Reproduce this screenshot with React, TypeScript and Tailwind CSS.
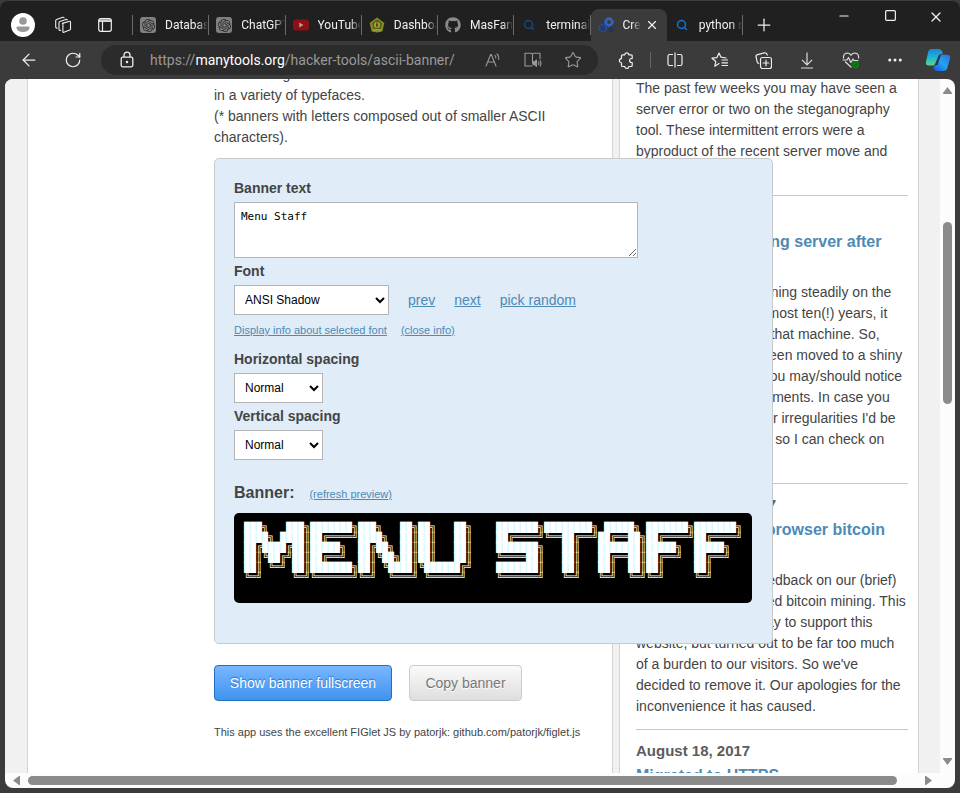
import React from "react";
import { ArrowLeft, Minus, MoreHorizontal, Plus, RotateCw, Search, Square, Star, X } from "lucide-react";
import { FaGithub } from "react-icons/fa";
import { SiOpenai } from "react-icons/si";

const BANNER = [
  "███╗   ███╗███████╗███╗   ██╗██╗   ██╗    ███████╗████████╗ █████╗ ███████╗███████╗",
  "████╗ ████║██╔════╝████╗  ██║██║   ██║    ██╔════╝╚══██╔══╝██╔══██╗██╔════╝██╔════╝",
  "██╔████╔██║█████╗  ██╔██╗ ██║██║   ██║    ███████╗   ██║   ███████║█████╗  █████╗  ",
  "██║╚██╔╝██║██╔══╝  ██║╚██╗██║██║   ██║    ╚════██║   ██║   ██╔══██║██╔══╝  ██╔══╝  ",
  "██║ ╚═╝ ██║███████╗██║ ╚████║╚██████╔╝    ███████║   ██║   ██║  ██║██║     ██║     ",
  "╚═╝     ╚═╝╚══════╝╚═╝  ╚═══╝ ╚═════╝     ╚══════╝   ╚═╝   ╚═╝  ╚═╝╚═╝     ╚═╝     ",
].join("\n");

function OpenAiIcon() {
  return (
    <span className="flex size-4 shrink-0 items-center justify-center rounded-[3px] bg-[#808080] text-[#2b2b2b]">
      <SiOpenai size={13} />
    </span>
  );
}

function YouTubeIcon() {
  return (
    <svg width="16" height="16" viewBox="0 0 16 16" className="shrink-0">
      <rect x="0" y="2.5" width="16" height="11" rx="3" fill="#8c1114" />
      <path d="M6.3 5.6 10.4 8l-4.1 2.4z" fill="#b9a3a3" />
    </svg>
  );
}

function CrestIcon() {
  return (
    <svg width="16" height="16" viewBox="0 0 16 16" className="shrink-0">
      <path d="M8 .5 15.3 6l-2 8.5-5.3 1-5.3-1L.7 6z" fill="#8d8a1e" />
      <path d="M8 2.3 13 6.2l-1.4 6.3H4.4L3 6.2z" fill="#3e6b2a" />
      <circle cx="8" cy="8" r="3" fill="#b5a32a" />
      <path d="M8 4.8 9.3 8 8 11 6.7 8z" fill="#8f2a22" />
      <path d="M4 12h8v1.6H4z" fill="#a99c2c" />
    </svg>
  );
}

function GearsIcon() {
  return (
    <svg width="16" height="16" viewBox="0 0 16 16" fill="none" className="shrink-0">
      <circle cx="11" cy="5" r="3.2" stroke="#2f66c4" strokeWidth="2.4" />
      <circle cx="11" cy="5" r="4.4" stroke="#2f66c4" strokeDasharray="1.5 1.6" />
      <circle cx="4.8" cy="11" r="3.5" fill="#1d3a7c" stroke="#27509d" strokeDasharray="1.6 1.2" strokeWidth="2" />
      <circle cx="4.8" cy="11" r="1.2" fill="#3b3b3b" />
      <circle cx="13" cy="12.5" r="1.6" stroke="#1c3263" strokeWidth="1.4" />
    </svg>
  );
}

function BlueSearch({ dim }: { dim?: boolean }) {
  return (
    <span className={dim ? "flex size-4 shrink-0 items-center justify-center text-[#174a78]" : "flex size-4 shrink-0 items-center justify-center text-[#1676d2]"}>
      <Search size={12} strokeWidth={3} />
    </span>
  );
}

function WorkspacesIcon() {
  return (
    <svg width="18" height="18" viewBox="0 0 18 18" fill="none" stroke="#eee" strokeWidth="1.1" strokeLinejoin="round">
      <path d="m8.4 7.4 7.200-2.100q.9-.2.9.7v7q0 .8-.8 1.100l-5.800 2.200q-1 .3-1-.7V8.500q0-.8.5-1.100Z" />
      <path d="M7 14.200q-2 .6-2-.8V6.600q0-.9.900-1.200L12 3.400q1.200-.3 1.300.9" />
      <path d="M3.600 12q-1.900.4-1.900-.9V4.600q0-.9.900-1.200L8.800 1.300q1.200-.3 1.300.9" />
    </svg>
  );
}

function TabActionsIcon() {
  return (
    <svg width="14" height="14" viewBox="0 0 14 14" fill="none" stroke="#eee" strokeWidth="1.200">
      <rect x=".7" y=".7" width="12.600" height="12.600" rx="2" />
      <path d="M1 2.200h12M4.500 4v9.500" />
      <path d="M1 3.300h12" />
    </svg>
  );
}

function ReadAloudIcon() {
  return (
    <svg width="16" height="16" viewBox="0 0 16 16" fill="none" stroke="#999" strokeWidth="1.100" strokeLinecap="round" strokeLinejoin="round">
      <path d="M1 14 5.700 2.500h.6L11 14M2.800 10h6.500" />
      <path d="M10 3.300q1 1 .8 2.700M12 1.800q2.300 2.200 1.600 5.700" />
    </svg>
  );
}

function ReaderIcon() {
  return (
    <svg width="18" height="16" viewBox="0 0 18 16" fill="none" stroke="#999" strokeWidth="1.100" strokeLinejoin="round">
      <path d="M8.500 14H1V1.200h6.200q1.300 0 1.300 1.300v9M8.500 2.500q0-1.300 1.300-1.300H16v6" />
      <path d="M9 9.800v2.800h1.500l2 1.800V8l-2 1.800z" fill="#999" />
      <path d="M14.300 9.500q1.300 1.700 0 3.500M16 8.200q2 3 0 6.200" />
    </svg>
  );
}

function PuzzleIcon() {
  return (
    <svg width="17" height="17" viewBox="0 0 17 17" fill="none" stroke="#eee" strokeWidth="1.200" strokeLinejoin="round">
      <path d="M4.500 2.800h2.300a2 2 0 0 1 4 0h2.400q1 0 1 1v2.700h-.6a2 2 0 0 0 0 4h.6v3q0 1-1 1h-2.400a2 2 0 0 1-4 0H4.500q-1 0-1-1v-2.700a2.100 2.100 0 0 1 0-4.200V3.800q0-1 1-1z" />
    </svg>
  );
}

function SplitIcon() {
  return (
    <svg width="16" height="16" viewBox="0 0 16 16" fill="none" stroke="#eee" strokeWidth="1.200">
      <path d="M6 2.500H2.500Q1 2.500 1 4v8q0 1.500 1.500 1.500H6M10 2.500h3.500Q15 2.500 15 4v8q0 1.500-1.500 1.500H10M8 .5v15" />
    </svg>
  );
}

function FavoritesIcon() {
  return (
    <svg width="17" height="16" viewBox="0 0 17 16" fill="none" stroke="#eee" strokeWidth="1.200" strokeLinecap="round" strokeLinejoin="round">
      <path d="M8 11.600 3.800 14.200l1-4.700L1 6.200l4.800-.5L8 1l2 4.200 5 .8M11 8h5.500M11 10.800h5.500M11 13.500h5.500" />
    </svg>
  );
}

function CollectionsIcon() {
  return (
    <svg width="17" height="17" viewBox="0 0 17 17" fill="none" stroke="#eee" strokeWidth="1.200" strokeLinejoin="round" strokeLinecap="round">
      <rect x="5.500" y="5.500" width="11" height="11" rx="2" />
      <path d="M11 8.200v5.600M8.200 11h5.600M3.600 11.500Q2.500 11 2.200 10L1 4.500q-.2-1.300 1-1.700L9.500.8q1.300-.3 2 .7l.8 1.500" />
    </svg>
  );
}

function HeartIcon() {
  return (
    <svg width="18" height="17" viewBox="0 0 18 17" fill="none" stroke="#ddd" strokeWidth="1.200" strokeLinejoin="round" strokeLinecap="round">
      <path d="M1.500 6q-.4-4.600 3.700-5Q7.700 1 9 3.200 10.400 1 13 1q4 .4 3.600 5M3.500 10 9 15M1 8h4l1.500-2.500 2.300 5L11 7l1 1.500h4" />
      <circle cx="13.500" cy="12.700" r="3.800" fill="#0f7a12" stroke="none" />
      <path d="m11.900 12.800 1.200 1.100 2-2.200" stroke="#062" />
    </svg>
  );
}

function CopilotIcon() {
  return (
    <svg width="26" height="24" viewBox="0 0 26 24">
      <defs>
        <linearGradient id="cpA" x1="0" y1="0" x2="0" y2="1">
          <stop offset="0" stopColor="#1588d8" />
          <stop offset=".5" stopColor="#1fb4d8" />
          <stop offset="1" stopColor="#58d68a" />
        </linearGradient>
        <linearGradient id="cpB" x1="0" y1="1" x2="1" y2="0">
          <stop offset="0" stopColor="#1b4fd8" />
          <stop offset=".5" stopColor="#22a4f2" />
          <stop offset="1" stopColor="#2a70e0" />
        </linearGradient>
      </defs>
      <path d="M6.500 1H14q2.500 0 3.200 2.500L17.800 6h-1.500q-2.200 0-3 2.200L10.500 15Q9.700 17.500 7.200 17.500H4Q0 17.500 1 13.500L3.200 4Q4 1 6.500 1z" fill="url(#cpA)" />
      <path d="M18.500 23H12q-2.500 0-3.200-2.500L8.200 18q2.800 0 3.600-2.500L14.500 8.500q.8-1.800 3-1.800H22q4 0 3 4l-2.700 9.300Q21.500 23 18.500 23z" fill="url(#cpB)" />
      <path d="M13.800 7.500h2L12.500 17h-2z" fill="#2c3550" />
    </svg>
  );
}

function Tab({ icon, title, active }: { icon: React.ReactNode; title: string; active?: boolean }) {
  if (active) {
    return (
      <button className="flex h-8 min-w-0 flex-1 items-center rounded-t-lg bg-[#3b3b3b] pl-[7px]">
        {icon}
        <span className="ml-[9px] w-[18px] overflow-hidden text-left whitespace-nowrap [mask-image:linear-gradient(to_right,black_50%,transparent)]">{title}</span>
        <X size={14} strokeWidth={2} className="ml-1 shrink-0" />
      </button>
    );
  }
  return (
    <button className="flex h-8 min-w-0 flex-1 items-center pl-[7px]">
      {icon}
      <span className="ml-[9px] flex-1 overflow-hidden text-left whitespace-nowrap [mask-image:linear-gradient(to_right,black_75%,transparent)]">{title}</span>
      <span className="h-5 w-px bg-[#6a6a6a]" />
    </button>
  );
}

function TabStrip() {
  return (
    <header className="flex h-[41px] shrink-0 items-end rounded-t-lg border-t border-[#3d3d3d] bg-[#202020] text-[12px] text-[#f0f0f0] font-[Roboto,sans-serif]">
      <div className="flex h-8 flex-1 items-center overflow-hidden pl-[11px]">
        <button aria-label="Profile" className="flex size-6 items-center justify-center rounded-full bg-white">
          <svg width="14" height="16" viewBox="0 0 14 16" fill="#999">
            <circle cx="7" cy="4" r="3.800" />
            <path d="M1.500 9.500h11Q14 9.500 13.500 11q-1 4-6.500 4T.5 11Q0 9.500 1.500 9.500z" />
          </svg>
        </button>
        <button aria-label="Workspaces" className="ml-[19px]"><WorkspacesIcon /></button>
        <button aria-label="Tab actions" className="ml-[26px]"><TabActionsIcon /></button>
        <span className="ml-5 h-5 w-px bg-[#6a6a6a]" />
        <nav className="flex w-[610px] items-center" aria-label="Tabs">
          <Tab icon={<OpenAiIcon />} title="Database" />
          <Tab icon={<OpenAiIcon />} title="ChatGPT" />
          <Tab icon={<YouTubeIcon />} title="YouTube" />
          <Tab icon={<CrestIcon />} title="Dashboard" />
          <Tab icon={<FaGithub size={16} color="#8a8a8a" className="shrink-0" />} title="MasFana" />
          <Tab icon={<BlueSearch dim />} title="terminal" />
          <Tab icon={<GearsIcon />} title="Create" active />
          <Tab icon={<BlueSearch />} title="python s" />
        </nav>
        <button aria-label="New tab" className="ml-[11px]"><Plus size={20} strokeWidth={1.500} /></button>
      </div>
      <div className="flex h-10 shrink-0 items-start pt-2 pr-px">
        <button aria-label="Minimize" className="flex w-[46px] justify-center"><Minus size={14} strokeWidth={2} /></button>
        <button aria-label="Maximize" className="flex w-[46px] justify-center"><Square size={13} strokeWidth={2.200} /></button>
        <button aria-label="Close" className="flex w-[46px] justify-center"><X size={16} strokeWidth={1.800} /></button>
      </div>
    </header>
  );
}

function ToolButton({ label, children }: { label: string; children: React.ReactNode }) {
  return (
    <button aria-label={label} className="flex w-11 items-center justify-center">
      {children}
    </button>
  );
}

function Toolbar() {
  return (
    <div className="flex h-[38px] shrink-0 items-center bg-[#3b3b3b] pr-px pl-[7px] text-[#f0f0f0]">
      <ToolButton label="Back"><ArrowLeft size={20} strokeWidth={1.500} /></ToolButton>
      <ToolButton label="Refresh"><RotateCw size={18} strokeWidth={1.600} /></ToolButton>
      <div className="ml-[6px] flex h-[30px] min-w-0 flex-1 items-center rounded-full bg-[#2b2b2b] pl-[18px] text-[14px] font-[Roboto,sans-serif]">
        <svg width="16" height="18" viewBox="0 0 16 18" fill="none" stroke="#eee" strokeWidth="1.300" className="shrink-0">
          <rect x="2.200" y="6.200" width="11.600" height="9.600" rx="1.500" />
          <path d="M5 6V4.200a3 3 0 0 1 6 0V6" />
          <circle cx="8" cy="11" r=".6" fill="#eee" />
        </svg>
        <span className="ml-[15px] flex-1 truncate text-[#999]">
          https://<span className="text-white">manytools.org</span>/hacker-tools/ascii-banner/
        </span>
        <button aria-label="Read aloud" className="flex w-10 justify-center"><ReadAloudIcon /></button>
        <button aria-label="Immersive reader" className="flex w-10 justify-center"><ReaderIcon /></button>
        <button aria-label="Add to favorites" className="mr-[5px] flex w-10 justify-center text-[#999]"><Star size={18} strokeWidth={1.500} /></button>
      </div>
      <div className="ml-[6px] flex shrink-0 items-center">
        <ToolButton label="Extensions"><PuzzleIcon /></ToolButton>
        <span className="mx-[2px] h-4 w-px bg-[#666]" />
        <ToolButton label="Split screen"><SplitIcon /></ToolButton>
        <ToolButton label="Favorites"><FavoritesIcon /></ToolButton>
        <ToolButton label="Collections"><CollectionsIcon /></ToolButton>
        <ToolButton label="Downloads">
          <svg width="14" height="17" viewBox="0 0 14 17" fill="none" stroke="#ddd" strokeWidth="1.200">
            <path d="M7 .5v12M2 7.800l5 5 5-5M1 16h12" />
          </svg>
        </ToolButton>
        <ToolButton label="Browser essentials"><HeartIcon /></ToolButton>
        <ToolButton label="Settings"><MoreHorizontal size={18} strokeWidth={2} /></ToolButton>
        <button aria-label="Copilot" className="flex w-[42px] justify-center"><CopilotIcon /></button>
      </div>
    </div>
  );
}

const LINK = "text-[#4d8ab5] underline";

function Field({ id, label, children }: { id: string; label: string; children: React.ReactNode }) {
  return (
    <div className="flex flex-col items-start gap-[3px]">
      <label htmlFor={id} className="text-[14px] leading-[21px] font-bold">{label}</label>
      {children}
    </div>
  );
}

function BannerForm() {
  return (
    <form className="relative z-10 mt-[10px] w-[559px] rounded-[5px] border border-[#c8cacc] bg-[#e0ecf8] px-[19px] pt-[19px] pb-10">
      <Field id="text" label="Banner text">
        <textarea
          id="text"
          defaultValue="Menu Staff"
          className="block h-14 w-[404px] border border-[#b5b5b5] bg-white px-[6px] py-[6px] text-[11px] leading-4 text-black font-['DejaVu_Sans_Mono',monospace]"
        />
      </Field>
      <div className="mt-[3px]">
        <Field id="font" label="Font">
          <div className="flex items-center gap-[19px] text-[14px]">
            <select id="font" className="h-[30px] w-[155px] border border-[#b5b5b5] bg-white pl-[6px] text-[12px] text-black">
              <option>ANSI Shadow</option>
            </select>
            <a href="#prev" className={LINK}>prev</a>
            <a href="#next" className={LINK}>next</a>
            <a href="#random" className={LINK}>pick random</a>
          </div>
        </Field>
      </div>
      <div className="mt-[5px] flex gap-[14px] text-[11px] leading-[21px]">
        <a href="#info" className={LINK}>Display info about selected font</a>
        <a href="#close" className={LINK}>(close info)</a>
      </div>
      <div className="mt-2">
        <Field id="horizontal" label="Horizontal spacing">
          <select id="horizontal" className="h-[30px] w-[89px] border border-[#b5b5b5] bg-white pl-[6px] text-[12px] text-black">
            <option>Normal</option>
          </select>
        </Field>
      </div>
      <div className="mt-[3px]">
        <Field id="vertical" label="Vertical spacing">
          <select id="vertical" className="h-[30px] w-[89px] border border-[#b5b5b5] bg-white pl-[6px] text-[12px] text-black">
            <option>Normal</option>
          </select>
        </Field>
      </div>
      <div className="mt-[21px] flex items-baseline gap-[15px] leading-[24px]">
        <h2 className="text-[16px] font-bold">Banner:</h2>
        <a href="#refresh" className={`text-[11px] ${LINK}`}>(refresh preview)</a>
      </div>
      <pre className="mt-[7px] h-[90px] w-[518px] overflow-hidden rounded-[5px] bg-black pt-[10px] pl-[10px] text-[10px] leading-[10px] text-white font-['Liberation_Mono',monospace]">
        {BANNER}
      </pre>
    </form>
  );
}

function Post({ date, title, body }: { date: string; title: string; body: string }) {
  return (
    <article className="border-t border-[#c8c8c8] pt-[10px]">
      <p className="text-[15px] leading-[21px] font-bold text-[#5c5c5c]">{date}</p>
      <h3 className="mt-1 text-[16px] leading-[21px] font-bold whitespace-pre text-[#4d8ab5]">{title}</h3>
      <p className="mt-[9px] mb-3 whitespace-pre">{body}</p>
    </article>
  );
}

function News() {
  return (
    <aside className="w-[300px] shrink-0 border-x border-[#d4d4d4] bg-white pr-[10px] pl-4">
      <p className="-mt-px mb-3 whitespace-pre">
        {"The past few weeks you may have seen a\nserver error or two on the steganography\ntool. These intermittent errors were a\nbyproduct of the recent server move and\nhave been fixed."}
      </p>
      <Post
        date="August 3, 2018"
        title={"Replacing our aging server after\nten years"}
        body={
          "Our site has been running steadily on the\nsame hardware for almost ten(!) years, it\nwas great running on that machine. So,\nall of our tools have been moved to a shiny\nnew server in which you may/should notice\nsome latency improvements. In case you\nsee any errors or other irregularities I'd be\nhappy to hear about it so I can check on\nthem."
        }
      />
      <Post
        date="September 22, 2017"
        title={"Removing the in-browser bitcoin\nminer"}
        body={
          "We received some feedback on our (brief)\ntryout of browser based bitcoin mining. This\nseemed like a nice way to support this\nwebsite, but turned out to be far too much\nof a burden to our visitors. So we've\ndecided to remove it. Our apologies for the\ninconvenience it has caused."
        }
      />
      <Post date="August 18, 2017" title="Migrated to HTTPS" body="" />
    </aside>
  );
}

export default function App() {
  return (
    <div className="flex h-screen flex-col overflow-hidden bg-[#3b3b3b] text-[14px] leading-[21px] text-[#444] font-['Liberation_Sans',Arial,sans-serif]">
      <TabStrip />
      <Toolbar />
      <div className="mx-[5px] mb-[5px] flex min-h-0 flex-1 flex-col overflow-hidden rounded-lg bg-[#fcfcfc]">
        <div className="flex min-h-0 flex-1">
          <div className="flex min-w-0 flex-1 gap-[6px] overflow-hidden bg-[#f1f1f1] pr-[21px] pl-[22px]">
            <main className="min-w-0 flex-1 border-x border-[#d4d4d4] bg-white pl-[186px]">
              <p className="-mt-[15px] whitespace-pre">
                {"Create a big ASCII banner*\nin a variety of typefaces.\n(* banners with letters composed out of smaller ASCII\ncharacters)."}
              </p>
              <BannerForm />
              <div className="mt-[21px] flex gap-[17px]">
                <button className="h-9 w-[178px] rounded-[4px] border border-[#1f6fc4] bg-linear-to-b from-[#78b7ff] to-[#3f93ee] text-white [text-shadow:0_-1px_1px_#1f6fc4]">
                  Show banner fullscreen
                </button>
                <button className="h-9 w-[113px] rounded-[4px] border border-[#ccc] bg-linear-to-b from-[#fafafa] to-[#dedede] text-[#777] [text-shadow:0_1px_0_white]">
                  Copy banner
                </button>
              </div>
              <p className="mt-[21px] text-[11px] leading-[21px] whitespace-nowrap">
                This app uses the excellent FIGlet JS by patorjk: github.com/patorjk/figlet.js
              </p>
            </main>
            <News />
          </div>
          <div className="flex w-[15px] shrink-0 flex-col items-center pt-2 pb-2">
            <svg width="9" height="7" viewBox="0 0 9 7" fill="#8b8b8b"><path d="M4.500 0 9 6v1H0V6z" /></svg>
            <div className="mt-32 h-[182px] w-[9px] rounded-full bg-[#8b8b8b]" />
            <svg className="mt-auto" width="9" height="7" viewBox="0 0 9 7" fill="#8b8b8b"><path d="M4.500 7 9 1V0H0v1z" /></svg>
          </div>
        </div>
        <div className="flex h-[15px] shrink-0 items-center pr-[23px] pl-2">
          <svg width="7" height="9" viewBox="0 0 7 9" fill="#8b8b8b"><path d="M0 4.500 6 0h1v9H6z" /></svg>
          <div className="mr-7 ml-2 h-[9px] flex-1 rounded-full bg-[#8b8b8b]" />
          <svg width="7" height="9" viewBox="0 0 7 9" fill="#8b8b8b"><path d="M7 4.500 1 0H0v9h1z" /></svg>
        </div>
      </div>
    </div>
  );
}
